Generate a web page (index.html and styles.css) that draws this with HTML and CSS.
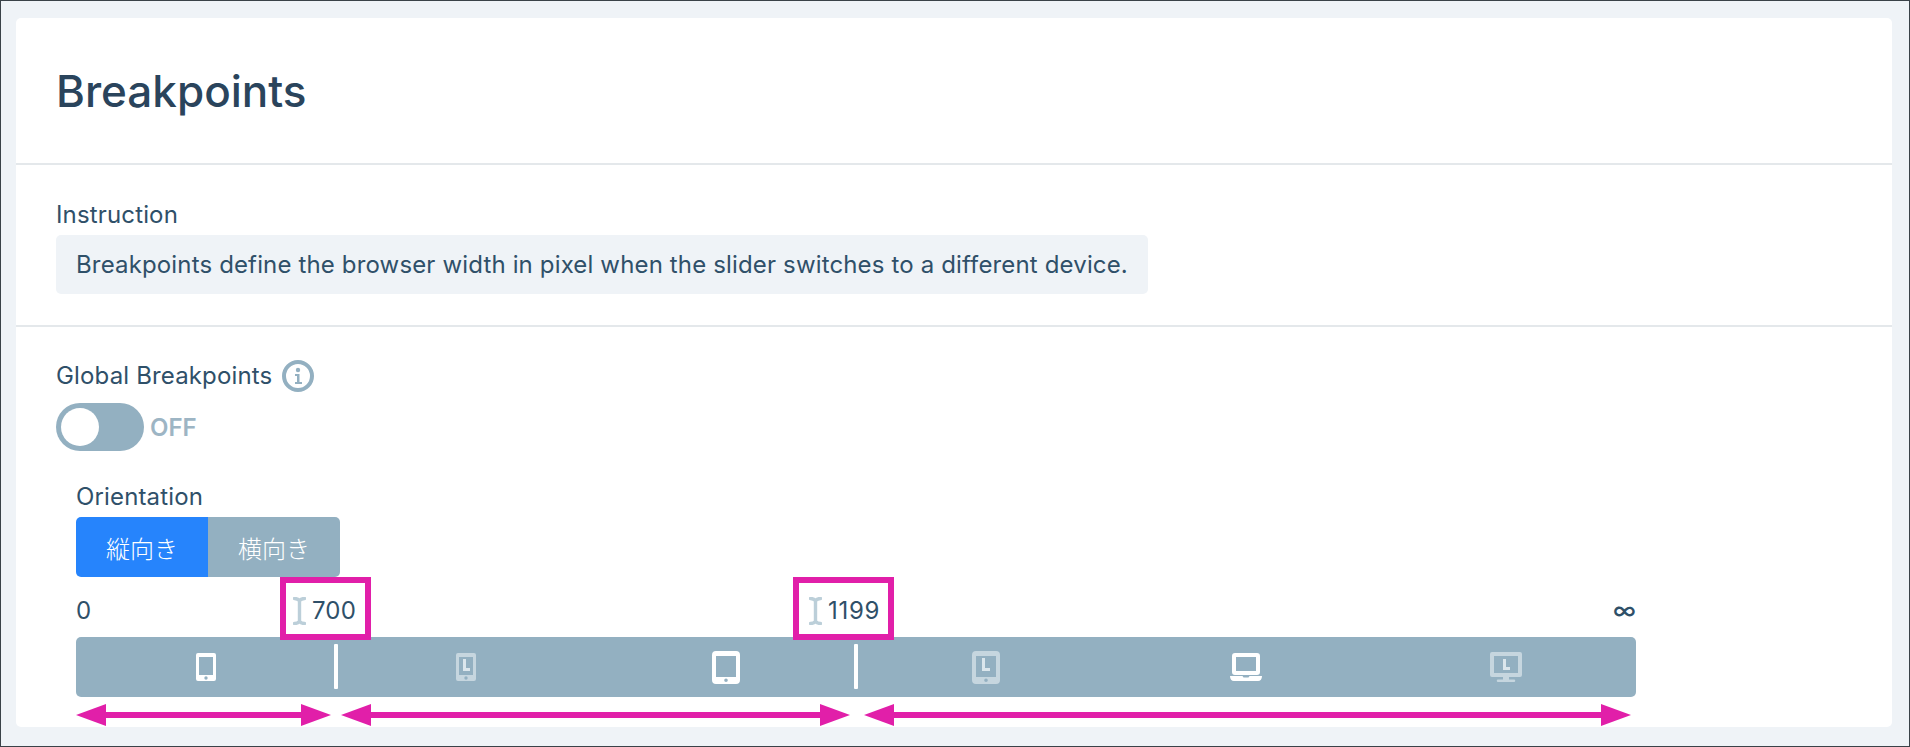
FILE: index.html

```html
<!DOCTYPE html>
<html lang="ja">
<head>
  <meta charset="UTF-8" />
  <title>Breakpoints</title>
  <link rel="stylesheet" href="styles.css">
</head>
<body>
  <div class="frame">
    <div class="card">
      <div class="card-head">
        <h1>Breakpoints</h1>
      </div>

      <div class="section instruction">
        <label class="field-label">Instruction</label>
        <div class="note">Breakpoints define the browser width in pixel when the slider switches to a different device.</div>
      </div>

      <div class="section global">
        <div class="field-label with-info">
          Global Breakpoints
          <svg class="info" viewBox="0 0 32 32">
            <circle cx="16" cy="16" r="14" fill="none" stroke="#93b0c1" stroke-width="4"/>
            <circle cx="16" cy="10" r="2.2" fill="#93b0c1"/>
            <path d="M13 14h4.5v8H20v2h-7v-2h2v-6h-2z" fill="#93b0c1"/>
          </svg>
        </div>
        <div class="switch-row">
          <div class="switch"><span class="knob"></span></div>
          <span class="switch-text">OFF</span>
        </div>

        <div class="slider-box">
          <div class="field-label">Orientation</div>
          <div class="btn-group">
            <button class="btn active">縦向き</button>
            <button class="btn">横向き</button>
          </div>

          <div class="labels">
            <span class="zero">0</span>
            <span class="marker marker-a">
              <svg class="handle" viewBox="0 0 13 28"><path d="M1.500 1.500c2 0 3.500.6 5 2 1.500-1.400 3-2 5-2M6.500 3.500v21M1.500 26.500c2 0 3.500-.6 5-2 1.500 1.400 3 2 5 2" fill="none" stroke="#bccfd9" stroke-width="3.400" stroke-linecap="round"/></svg>
              700
            </span>
            <span class="marker marker-b">
              <svg class="handle" viewBox="0 0 13 28"><path d="M1.500 1.500c2 0 3.500.6 5 2 1.500-1.400 3-2 5-2M6.500 3.500v21M1.500 26.500c2 0 3.500-.6 5-2 1.500 1.400 3 2 5 2" fill="none" stroke="#bccfd9" stroke-width="3.400" stroke-linecap="round"/></svg>
              1199
            </span>
            <span class="infinity">∞</span>
          </div>

          <div class="bar">
            <div class="cell split">
              <svg class="ico" width="20" height="28" viewBox="0 0 20 28"><path fill="#fff" fill-rule="evenodd" d="M2 0h16a2 2 0 0 1 2 2v24a2 2 0 0 1-2 2H2a2 2 0 0 1-2-2V2a2 2 0 0 1 2-2zM3 4v18h14V4zM10 23.300a1.700 1.700 0 1 0 0 3.400 1.700 1.700 0 0 0 0-3.400z"/></svg>
            </div>
            <div class="cell">
              <svg class="ico" width="20" height="28" viewBox="0 0 20 28"><path fill="#c6d6df" fill-rule="evenodd" d="M2 0h16a2 2 0 0 1 2 2v24a2 2 0 0 1-2 2H2a2 2 0 0 1-2-2V2a2 2 0 0 1 2-2zM3 4v18h14V4zM10 23.300a1.700 1.700 0 1 0 0 3.400 1.700 1.700 0 0 0 0-3.400z"/><path fill="#dbe6ec" d="M7 6h3v9h4v3H7z"/></svg>
            </div>
            <div class="cell split">
              <svg class="ico" width="28" height="33" viewBox="0 0 28 33"><path fill="#fff" fill-rule="evenodd" d="M4 0h20a4 4 0 0 1 4 4v25a4 4 0 0 1-4 4H4a4 4 0 0 1-4-4V4a4 4 0 0 1 4-4zM4 5v21h20V5zM14 27.500a1.800 1.800 0 1 0 0 3.600 1.800 1.800 0 0 0 0-3.600z"/></svg>
            </div>
            <div class="cell">
              <svg class="ico" width="28" height="33" viewBox="0 0 28 33"><path fill="#c6d6df" fill-rule="evenodd" d="M4 0h20a4 4 0 0 1 4 4v25a4 4 0 0 1-4 4H4a4 4 0 0 1-4-4V4a4 4 0 0 1 4-4zM4 5v21h20V5zM14 27.500a1.800 1.800 0 1 0 0 3.600 1.800 1.800 0 0 0 0-3.600z"/><path fill="#dbe6ec" d="M10 7h3v10h5v3h-8z"/></svg>
            </div>
            <div class="cell">
              <svg class="ico" width="32" height="28" viewBox="0 0 32 28"><path fill="#fff" fill-rule="evenodd" d="M5 0h22a3 3 0 0 1 3 3v16a3 3 0 0 1-3 3H5a3 3 0 0 1-3-3V3a3 3 0 0 1 3-3zM6 4v14h20V4z"/><path fill="#fff" d="M0 23h12.500l1 1.500h5l1-1.500H32c0 3-1.500 5-4 5H4c-2.500 0-4-2-4-5z"/></svg>
            </div>
            <div class="cell">
              <svg class="ico" width="32" height="30" viewBox="0 0 32 30"><path fill="#c6d6df" fill-rule="evenodd" d="M2 0h28a2 2 0 0 1 2 2v21a2 2 0 0 1-2 2H2a2 2 0 0 1-2-2V2a2 2 0 0 1 2-2zM4 4v17h24V4z"/><path fill="#c6d6df" d="M13 25h6v2.500h5a1.200 1.200 0 0 1 0 2.500H8a1.200 1.200 0 0 1 0-2.500h5z"/><path fill="#dbe6ec" d="M13 7h3v8h4v3h-7z"/></svg>
            </div>
          </div>

          <div class="ranges">
            <div class="range range-a"></div>
            <div class="range range-b"></div>
            <div class="range range-c"></div>
          </div>
        </div>
      </div>
    </div>
  </div>
</body>
</html>
```

FILE: styles.css

```css
* {
  box-sizing: border-box;
}
html, body {
  margin: 0;
  padding: 0;
}
body {
  font-family: Inter, "Noto Sans CJK JP", sans-serif;
  color: #2f5069;
}
.frame {
  height: 747px;
  padding: 17px 17px 19px 15px;
  background: #eff3f7;
  border: 1px solid #3a4248;
  overflow: hidden;
}
.card {
  height: 100%;
  background: #fff;
  border-radius: 5px;
}
.card-head {
  height: 147px;
  padding: 48px 40px 0;
  border-bottom: 2px solid #e4e8eb;
}
h1 {
  margin: 0;
  font-size: 44px;
  line-height: 50px;
  font-weight: 500;
  color: #2a445c;
}
.section {
  padding: 0 40px;
}
.instruction {
  height: 162px;
  padding-top: 32px;
  border-bottom: 2px solid #e4e8eb;
}
.field-label {
  display: block;
  font-size: 24px;
  line-height: 36px;
  letter-spacing: 0.15px;
  font-weight: 400;
}
.instruction .field-label {
  margin-bottom: 2px;
}
.note {
  display: inline-block;
  height: 59px;
  padding: 0 20px;
  font-size: 24px;
  letter-spacing: 0.15px;
  line-height: 59px;
  background: #eff3f7;
  border-radius: 5px;
}
.global {
  padding-top: 31px;
}
.with-info {
  display: flex;
  align-items: center;
  gap: 10px;
  height: 36px;
}
.info {
  width: 32px;
  height: 32px;
}
.switch-row {
  display: flex;
  align-items: center;
  gap: 6px;
  margin-top: 9px;
}
.switch {
  width: 88px;
  height: 48px;
  padding: 5px;
  background: #93b0c1;
  border-radius: 24px;
}
.knob {
  display: block;
  width: 38px;
  height: 38px;
  background: #fff;
  border-radius: 50%;
}
.switch-text {
  font-size: 24px;
  font-weight: 600;
  color: #9db5c4;
}
.slider-box {
  width: 1580px;
  padding-left: 20px;
  margin-top: 28px;
}
.btn-group {
  display: flex;
  margin-top: 2px;
}
.btn {
  width: 132px;
  height: 60px;
  border: none;
  font-family: inherit;
  font-size: 24px;
  font-weight: 300;
  color: #fff;
  background: #93b0c1;
}
.btn:last-child {
  border-radius: 0 5px 5px 0;
}
.btn.active {
  background: #2684fc;
  border-radius: 5px 0 0 5px;
}
.labels {
  display: flex;
  align-items: center;
  width: 1560px;
  height: 60px;
  font-size: 24px;
  letter-spacing: 0.15px;
  position: relative;
}
.zero {
  width: 204px;
  padding-top: 6px;
}
.infinity {
  margin-left: auto;
  padding-top: 6px;
  font-weight: 500;
}
.marker {
  display: flex;
  align-items: center;
  gap: 6px;
  height: 63px;
  padding-top: 4px;
  margin-bottom: -3px;
  border: 6px solid #e11fa9;
  position: relative;
  z-index: 1;
}
.marker-a {
  width: 91px;
  padding-left: 7px;
}
.marker-b {
  width: 101px;
  padding-left: 10px;
  margin-left: 422px;
  letter-spacing: 0.7px;
}
.handle {
  width: 13px;
  height: 28px;
}
.bar {
  display: grid;
  grid-template-columns: repeat(6, 260px);
  height: 60px;
  background: #93b0c1;
  border-radius: 5px;
}
.cell {
  display: flex;
  align-items: center;
  justify-content: center;
  position: relative;
}
.split::after {
  content: "";
  position: absolute;
  top: 7px;
  right: -2px;
  width: 4px;
  height: 45px;
  background: #fff;
  border-radius: 1px;
}
.ranges {
  display: flex;
  width: 1560px;
  margin-top: 7px;
}
.range {
  display: flex;
  justify-content: space-between;
  height: 22px;
  background: linear-gradient(#e11fa9, #e11fa9) center / calc(100% - 40px) 6px no-repeat;
}
.range::before,
.range::after {
  content: "";
  width: 30px;
  height: 22px;
  background: #e11fa9;
}
.range::before {
  clip-path: polygon(0 50%, 100% 0, 100% 100%);
}
.range::after {
  clip-path: polygon(0 0, 100% 50%, 0 100%);
}
.range-a {
  width: 255px;
}
.range-b {
  width: 509px;
  margin-left: 10px;
}
.range-c {
  width: 767px;
  margin-left: 14px;
}
```
